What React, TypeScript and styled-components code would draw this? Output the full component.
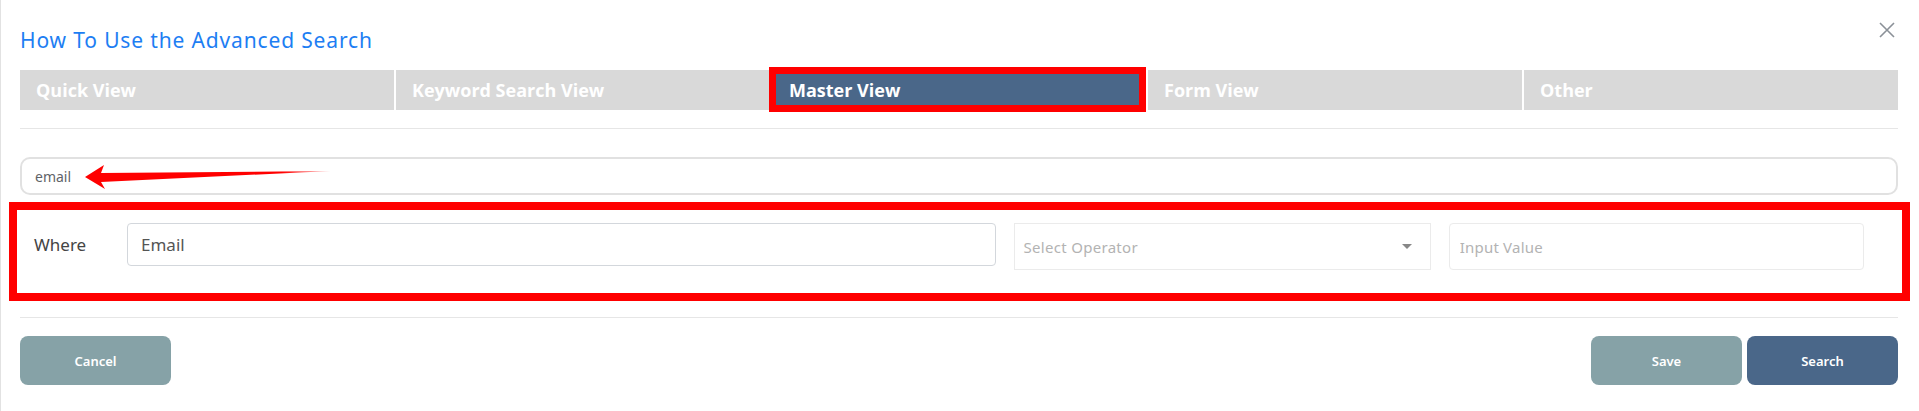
import React from "react";
import styled, { createGlobalStyle, css } from "styled-components";

const GlobalStyle = createGlobalStyle`
  html, body {
    margin: 0;
    padding: 0;
    background: #ffffff;
  }
  body {
    font-family: "Noto Sans", "Open Sans", Arial, sans-serif;
  }
  * {
    box-sizing: border-box;
  }
`;

const Modal = styled.div`
  width: 1919px;
  height: 411px;
  padding: 28px 21px 26px 19px;
  border-left: 1px solid #e2e2e2;
  background: #fff;
  display: flex;
  flex-direction: column;
`;

const Header = styled.div`
  display: flex;
  justify-content: space-between;
  align-items: flex-start;
  height: 24px;
`;

const Title = styled.h4`
  margin: 0;
  font-family: "Noto Sans", sans-serif;
  font-weight: 400;
  font-size: 21px;
  line-height: 24px;
  letter-spacing: 0.85px;
  color: #1d7ef3;
`;

const CloseButton = styled.button`
  width: 18px;
  height: 18px;
  margin-top: -7px;
  margin-right: 2px;
  padding: 0;
  border: none;
  background: none;
  color: #8b9198;
  display: flex;
  align-items: center;
  justify-content: center;
  cursor: pointer;
`;

const TabBar = styled.div`
  margin-top: 18px;
  display: grid;
  grid-template-columns: repeat(5, 1fr);
  column-gap: 2px;
  height: 40px;
`;

const Tab = styled.div<{ $active?: boolean }>`
  position: relative;
  display: flex;
  align-items: center;
  padding-left: 16px;
  background: #d9d9d9;
  color: #ffffff;
  font-family: "Open Sans", sans-serif;
  font-weight: 700;
  font-size: 18px;
  ${(p) =>
    p.$active &&
    css`
      background: #4a6789;
      padding-left: 17px;
    `}
`;

const TabHighlight = styled.span`
  position: absolute;
  top: -3px;
  bottom: -2px;
  left: -3px;
  right: 0;
  border: 7px solid #ff0000;
  pointer-events: none;
`;

const Divider = styled.div<{ $gap: number }>`
  margin-top: ${(p) => p.$gap}px;
  height: 1px;
  background: #e6e6e6;
`;

const KeywordWrap = styled.div`
  position: relative;
  margin-top: 28px;
  height: 38px;
`;

const KeywordInput = styled.input`
  width: 100%;
  height: 38px;
  padding: 0 13px;
  border: 2px solid #e1e1e1;
  border-radius: 10px;
  font-family: "Noto Sans", sans-serif;
  font-size: 14px;
  color: #5f6368;
  outline: none;
`;

const ArrowMark = styled.svg`
  position: absolute;
  left: 61px;
  top: 6px;
  pointer-events: none;
`;

const FilterSection = styled.div`
  margin: 7px -12px 0 -11px;
  border: 8px solid #ff0000;
  padding: 13px 38px 23px 17px;
  display: grid;
  grid-template-columns: 75px minmax(0, 868fr) minmax(0, 417fr) minmax(0, 415fr);
  column-gap: 18px;
  align-items: start;
`;

const WhereLabel = styled.label`
  height: 43px;
  line-height: 43px;
  font-family: "Noto Sans", sans-serif;
  font-size: 17px;
  color: #444;
`;

const fieldBase = css`
  font-family: "Noto Sans", sans-serif;
  background: #fff;
  outline: none;
`;

const FieldInput = styled.input`
  ${fieldBase};
  height: 43px;
  padding: 0 13px;
  border: 1px solid #d3d7dc;
  border-radius: 4px;
  font-size: 17px;
  color: #555;
`;

const SelectBox = styled.div`
  ${fieldBase};
  height: 47px;
  padding: 0 18px 0 9px;
  border: 1px solid #ebebeb;
  display: flex;
  align-items: center;
  justify-content: space-between;
  font-size: 15px;
  letter-spacing: 0.3px;
  color: #b3b3b3;
`;

const Caret = styled.span`
  width: 0;
  height: 0;
  border-left: 5px solid transparent;
  border-right: 5px solid transparent;
  border-top: 5px solid #888;
`;

const ValueInput = styled.input`
  ${fieldBase};
  height: 47px;
  padding: 0 10px;
  border: 1px solid #ebebeb;
  border-radius: 4px;
  font-size: 15px;
  letter-spacing: 0.2px;
  color: #555;
  &::placeholder {
    color: #b3b3b3;
  }
`;

const Footer = styled.div`
  margin-top: 18px;
  display: flex;
  justify-content: space-between;
`;

const ButtonGroup = styled.div`
  display: flex;
  gap: 5px;
`;

const Button = styled.button<{ $primary?: boolean }>`
  width: 151px;
  height: 49px;
  border: none;
  border-radius: 8px;
  background: ${(p) => (p.$primary ? "#4a6789" : "#86a2a7")};
  color: #fff;
  font-family: "Noto Sans", sans-serif;
  font-weight: 600;
  font-size: 13px;
  cursor: pointer;
`;

const tabs = ["Quick View", "Keyword Search View", "Master View", "Form View", "Other"];

export default function App() {
  return (
    <>
      <GlobalStyle />
      <Modal>
        <Header>
          <Title>How To Use the Advanced Search</Title>
          <CloseButton aria-label="close">
            <svg width="16" height="16" viewBox="0 0 16 16">
              <path d="M1 1 L15 15 M15 1 L1 15" stroke="currentColor" strokeWidth="1.6" />
            </svg>
          </CloseButton>
        </Header>

        <TabBar>
          {tabs.map((t) => (
            <Tab key={t} $active={t === "Master View"}>
              {t}
              {t === "Master View" && <TabHighlight />}
            </Tab>
          ))}
        </TabBar>

        <Divider $gap={18} />

        <KeywordWrap>
          <KeywordInput value="email" readOnly />
          <ArrowMark width="256" height="30" viewBox="0 0 256 30">
            <defs>
              <linearGradient id="arrowFade" x1="0" y1="0" x2="1" y2="0">
                <stop offset="0" stopColor="#ff0000" />
                <stop offset="0.8" stopColor="#ff0000" />
                <stop offset="1" stopColor="#ff0000" stopOpacity="0.25" />
              </linearGradient>
            </defs>
            <polygon
              points="4,14 23,2 20,10 250,8 20,19 24,26"
              fill="url(#arrowFade)"
            />
          </ArrowMark>
        </KeywordWrap>

        <FilterSection>
          <WhereLabel>Where</WhereLabel>
          <FieldInput value="Email" readOnly />
          <SelectBox>
            <span>Select Operator</span>
            <Caret />
          </SelectBox>
          <ValueInput placeholder="Input Value" />
        </FilterSection>

        <Divider $gap={16} />

        <Footer>
          <Button>Cancel</Button>
          <ButtonGroup>
            <Button>Save</Button>
            <Button $primary>Search</Button>
          </ButtonGroup>
        </Footer>
      </Modal>
    </>
  );
}
